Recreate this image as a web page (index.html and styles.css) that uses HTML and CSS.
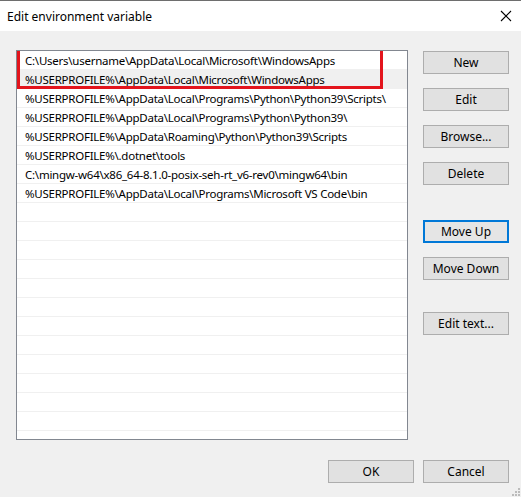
FILE: index.html
```html
<!DOCTYPE html>
<html lang="en">
<head>
    <meta charset="UTF-8">
    <meta name="viewport" content="width=device-width, initial-scale=1.0">
    <title>Edit environment variable</title>
    <link rel="stylesheet" href="styles.css">
</head>
<body>
    <div class="window">
        <div class="titlebar">
            <span class="title">Edit environment variable</span>
            <svg class="close" width="12" height="12" viewBox="0 0 12 12">
                <path d="M1 1 L11 11 M11 1 L1 11" stroke="#000" stroke-width="1.1" fill="none"/>
            </svg>
        </div>
        <div class="content">
            <div class="listbox">
                <div class="row">C:\Users\username\AppData\Local\Microsoft\WindowsApps</div>
                <div class="row selected">%USERPROFILE%\AppData\Local\Microsoft\WindowsApps</div>
                <div class="row">%USERPROFILE%\AppData\Local\Programs\Python\Python39\Scripts\</div>
                <div class="row">%USERPROFILE%\AppData\Local\Programs\Python\Python39\</div>
                <div class="row">%USERPROFILE%\AppData\Roaming\Python\Python39\Scripts</div>
                <div class="row">%USERPROFILE%\.dotnet\tools</div>
                <div class="row">C:\mingw-w64\x86_64-8.1.0-posix-seh-rt_v6-rev0\mingw64\bin</div>
                <div class="row">%USERPROFILE%\AppData\Local\Programs\Microsoft VS Code\bin</div>
                <div class="row"></div>
                <div class="row"></div>
                <div class="row"></div>
                <div class="row"></div>
                <div class="row"></div>
                <div class="row"></div>
                <div class="row"></div>
                <div class="row"></div>
                <div class="row"></div>
                <div class="row"></div>
                <div class="row"></div>
                <div class="row"></div>
                <div class="row"></div>
                <div class="highlight"></div>
            </div>
            <div class="side">
                <button class="btn">New</button>
                <button class="btn">Edit</button>
                <button class="btn">Browse...</button>
                <button class="btn">Delete</button>
                <button class="btn focused gap-lg">Move Up</button>
                <button class="btn">Move Down</button>
                <button class="btn gap-xl">Edit text...</button>
            </div>
        </div>
        <div class="footer">
            <button class="btn">OK</button>
            <button class="btn">Cancel</button>
        </div>
        <svg class="grip" width="10" height="10" viewBox="0 0 10 10">
            <rect x="7" y="1" width="2" height="2" fill="#bcbcbc"/>
            <rect x="4" y="4" width="2" height="2" fill="#bcbcbc"/>
            <rect x="7" y="4" width="2" height="2" fill="#bcbcbc"/>
            <rect x="1" y="7" width="2" height="2" fill="#bcbcbc"/>
            <rect x="4" y="7" width="2" height="2" fill="#bcbcbc"/>
            <rect x="7" y="7" width="2" height="2" fill="#bcbcbc"/>
        </svg>
    </div>
</body>
</html>
```

FILE: styles.css
```css
body {
    margin: 0;
    font-family: "Noto Sans", "Open Sans", sans-serif;
    font-size: 12px;
    color: #000;
    background: #f0f0f0;
}
.window {
    position: relative;
    width: 521px;
    height: 497px;
    background: #f0f0f0;
    overflow: hidden;
}
.titlebar {
    height: 30px;
    border-top: 1px solid #6e6e6e;
    background: #fff;
    display: flex;
    align-items: center;
    justify-content: space-between;
    padding: 0 9px 0 7px;
}
.title {
    font-size: 12px;
}
.content {
    display: flex;
    padding: 19px 0 0 16px;
}
.listbox {
    position: relative;
    width: 390px;
    height: 388px;
    border: 1px solid #828790;
    background: #fff;
    overflow: hidden;
}
.row {
    height: 16px;
    padding: 2px 0 0 8px;
    line-height: 16px;
    font-size: 11.5px;
    border-bottom: 1px solid #f0f0f0;
    white-space: nowrap;
    letter-spacing: -0.25px;
}
.row.selected {
    background: #f0f0f0;
}
.highlight {
    position: absolute;
    left: 0;
    top: -3px;
    width: 360px;
    height: 35px;
    border: 3px solid #e3141c;
}
.side {
    display: flex;
    flex-direction: column;
    gap: 14px;
    padding: 1px 0 0 15px;
}
.btn {
    width: 86px;
    height: 23px;
    padding: 0;
    border: 1px solid #adadad;
    background: #e1e1e1;
    font-family: inherit;
    font-size: 12px;
    color: #000;
}
.btn.focused {
    border: 2px solid #0078d7;
    background: #e5e5e5;
}
.gap-lg {
    margin-top: 21px;
}
.gap-xl {
    margin-top: 18px;
}
.footer {
    display: flex;
    justify-content: flex-end;
    gap: 9px;
    padding: 20px 12px 0 0;
}
.grip {
    position: absolute;
    right: 0;
    bottom: 0;
}
```
